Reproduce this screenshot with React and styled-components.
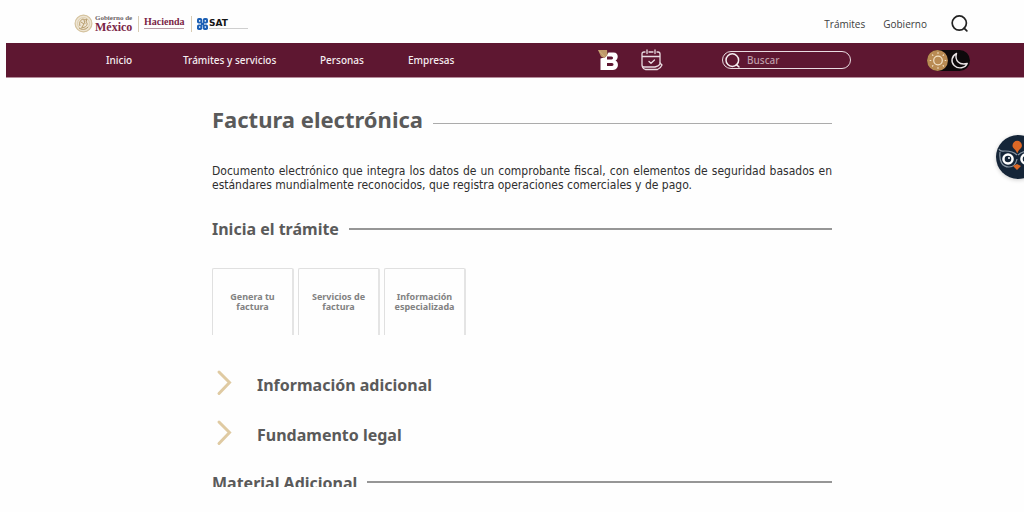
import React from "react";
import styled, { createGlobalStyle } from "styled-components";

const Global = createGlobalStyle`
  * { box-sizing: border-box; }
  body { margin: 0; background: #fefefe; font-family: "Noto Sans", "Open Sans", sans-serif; color: #333; overflow: hidden; }
  a { color: inherit; text-decoration: none; }
  h1, h2, p { margin: 0; }
  button { font: inherit; border: 0; padding: 0; background: none; cursor: pointer; }
`;

const Page = styled.div`
  position: relative;
  overflow: hidden;
`;

const TopBar = styled.header`
  display: flex;
  align-items: center;
  justify-content: space-between;
  height: 43px;
  padding: 4px 56px 0 74px;
`;

const Brands = styled.div`
  display: flex;
  align-items: center;
  height: 20px;
`;

const GobLink = styled.a`
  display: flex;
  align-items: center;
  gap: 2px;
  width: 64px;
`;

const GobText = styled.span`
  display: grid;
  font-family: "Liberation Serif", serif;
  font-weight: 700;
  font-size: 7px;
  line-height: 7px;
  color: #6b6264;
  white-space: nowrap;
`;

const GobName = styled.span`
  font-size: 12px;
  line-height: 11px;
  color: #7a2546;
`;

const Hacienda = styled.a`
  width: 53px;
  height: 16px;
  padding: 0 0 0 5px;
  border-left: 1px solid #d9ccb4;
  font-family: "Liberation Serif", serif;
  font-weight: 700;
  font-size: 10px;
  line-height: 12px;
  color: #7a2546;
`;

const HaciendaName = styled.span`
  display: block;
  width: 40px;
  border-bottom: 1px solid #b79aa5;
`;

const SatLink = styled.a`
  display: flex;
  align-items: center;
  gap: 1px;
  height: 16px;
  padding-left: 5px;
  border-left: 1px solid #d9ccb4;
`;

const SatName = styled.span`
  width: 39px;
  padding-top: 1px;
  border-bottom: 1px solid #cfcfcf;
  font-family: "DejaVu Sans", sans-serif;
  font-weight: 700;
  font-size: 9px;
  line-height: 9px;
  color: #161616;
`;

const TopLinks = styled.nav`
  display: flex;
  align-items: center;
  gap: 18px;
  font-family: "Open Sans", sans-serif;
  font-size: 10px;
  color: #3c3c3c;
`;

const IconButton = styled.button`
  display: grid;
  place-items: center;
  color: #222;
`;

const SiteSearch = styled(IconButton)`
  margin-left: 6px;
`;

const NavBar = styled.div`
  display: flex;
  align-items: center;
  height: 35px;
  margin-left: 6px;
  padding: 0 54px 0 100px;
  background: #5e1731;
  border-bottom: 1px solid #b58d9b;
  color: #f5edf0;
`;

const Menu = styled.nav`
  display: grid;
  grid-template-columns: 77px 137px 88px 1fr;
  width: 492px;
  font-size: 10px;
  font-weight: 500;
  white-space: nowrap;
`;

const Shortcuts = styled.div`
  display: flex;
  align-items: center;
  gap: 22px;
  width: 124px;
`;

const Search = styled.label`
  display: flex;
  align-items: center;
  gap: 7px;
  width: 129px;
  height: 18px;
  padding-left: 2px;
  border: 1px solid #e9dce1;
  border-radius: 9px;
`;

const SearchInput = styled.input`
  width: 90px;
  padding: 0;
  border: 0;
  outline: 0;
  background: transparent;
  color: #fff;
  font: 500 10px "Noto Sans", sans-serif;
  &::placeholder { color: #bd9ba7; opacity: 1; }
`;

const ThemeSwitch = styled.button`
  display: flex;
  align-items: center;
  width: 43px;
  height: 21px;
  margin-left: auto;
  border-radius: 11px;
  background: #0d090b;
`;

const Main = styled.main`
  padding: 26px 192px 0 212px;
`;

const HeadingRow = styled.div`
  display: flex;
  align-items: center;
  gap: 10px;
  &::after {
    content: "";
    flex: 1;
    height: 2px;
    background: #969696;
  }
`;

const TitleRow = styled(HeadingRow)`
  &::after {
    height: 1px;
    margin-top: 8px;
    background: #ababab;
  }
`;

const CutRow = styled(HeadingRow)`
  align-items: flex-start;
  height: 16px;
  overflow: hidden;
  &::after { margin-top: 10px; }
`;

const Title = styled.h1`
  font-size: 22px;
  line-height: 30px;
  color: #5a5a5a;
`;

const Subtitle = styled.h2`
  font-size: 16px;
  line-height: 24px;
  font-weight: 700;
  color: #5a5a5a;
`;

const Intro = styled.p`
  margin: 30px 0 25px;
  font-family: "DejaVu Sans Condensed", "Noto Sans", sans-serif;
  font-size: 12px;
  line-height: 14px;
  color: #2e2e2e;
  text-align: justify;
`;

const Cards = styled.div`
  display: flex;
  gap: 4px;
  margin: 27px 0 34px;
`;

const Card = styled.a`
  display: flex;
  align-items: center;
  justify-content: center;
  width: 82px;
  height: 67px;
  padding: 0 8px;
  border: 1px solid #e0e0e0;
  border-right: 2px solid #e4e4e4;
  border-bottom: 0;
  border-radius: 2px 2px 0 0;
  font-size: 9px;
  line-height: 10px;
  font-weight: 700;
  text-align: center;
  color: #828282;
`;

const Sections = styled.div`
  padding-bottom: 2px;
`;

const Accordion = styled.button`
  display: flex;
  align-items: flex-start;
  gap: 25px;
  width: 100%;
  height: 50px;
  padding-left: 4px;
  text-align: left;
`;

const AccordionTitle = styled(Subtitle)`
  padding-top: 4px;
`;

const Assistant = styled.button`
  position: absolute;
  top: 135px;
  right: -16px;
  width: 44px;
  height: 44px;
  border-radius: 50%;
  box-shadow: 0 1px 4px #0003;
`;

const Seal = () => (
  <svg width="19" height="19" viewBox="0 0 19 19" fill="none" stroke="#b79c6c">
    <circle cx="9.5" cy="9.5" r="8.4" fill="#eee5d3" stroke="#d5c39f" strokeWidth="1.2" />
    <circle cx="9.5" cy="9.5" r="6" stroke="#d9c9a8" strokeWidth=".8" />
    <path d="M6 12c-1-3 0-6 3-7l2 1 2-1-1 3c2 1 1 4-1 5l-4 1M7 8l3 2-2 3M10 6l1 4M5 14c3 2 6 2 9-1" />
  </svg>
);

const SatMark = () => (
  <svg width="11" height="12" viewBox="0 0 11 12">
    <g fill="#1c5fb4">
      <rect width="5.200" height="5.600" rx="1.800" /><rect x="5.800" width="5.200" height="5.600" rx="1.800" />
      <rect y="6.400" width="5.200" height="5.600" rx="1.800" /><rect x="5.800" y="6.400" width="5.200" height="5.600" rx="1.800" />
      <path d="M4 4.500h3v3H4z" />
    </g>
    <g fill="#fff">
      <circle cx="2.700" cy="2.900" r=".8" /><circle cx="8.300" cy="2.900" r=".8" />
      <circle cx="2.700" cy="9.100" r=".8" /><circle cx="8.300" cy="9.100" r=".8" />
    </g>
  </svg>
);

const Magnifier = ({ size }) => (
  <svg width={size} height={size} viewBox="0 0 16 16" fill="none" stroke="currentColor" strokeWidth="1.6" strokeLinecap="round">
    <circle cx="7.8" cy="7.6" r="6.7" />
    <path d="M12.3 12.4l2.6 2.6" />
  </svg>
);

const MailboxLogo = () => (
  <svg width="21" height="22" viewBox="0 0 21 22">
    <path fill="#fff" fillRule="evenodd" d="M2.500 9.500l5-1.500 3-4.500h5c5.500 0 5 6.500 2 8 4 2 3 9.500-2.500 9.500H2.500zM9 7.500v3h4.500c2 0 2-3 0-3zM9 14v3h5c2 0 2-3 0-3z" />
    <path fill="#bf9a69" d="M0 1h9l.5 5L6.500 9 3 7.500z" />
    <path d="M1 1.500l5.500 6" stroke="#d9ba8d" strokeWidth=".7" />
  </svg>
);

const CalendarIcon = () => (
  <svg width="22" height="22" viewBox="0 0 22 22" fill="none" stroke="#e9dce1" strokeWidth="1.3" strokeLinecap="round" strokeLinejoin="round">
    <path d="M4 3H3Q1 3 1 5v11q0 2 2 2h11q4-1 5-3V5q0-2-2-2h-1M8 3h4M1 7.500h18M6 1v3.500M14 1v3.500M8 12.500l2 1.800L13.500 11" />
    <path d="M1.500 18q1 2.500 3 2.500h12q3-1 4.500-4.500l-2-2" />
  </svg>
);

const SunMoon = () => (
  <svg width="43" height="21" viewBox="0 0 43 21" fill="none" stroke="#f3e3c8" strokeWidth="1.200" strokeLinecap="round">
    <circle cx="10.500" cy="10.500" r="10.500" fill="#b98b53" stroke="none" />
    <circle cx="11" cy="10.500" r="4.300" />
    <path d="M11 2.700v.6M11 17.700v.6M3.200 10.500h.6M18.200 10.500h.6M5.500 5l.4.400M16.100 15.600l.4.400M16.500 5l-.4.400M5.900 15.600l-.4.400" />
    <path stroke="#e8e2e4" strokeWidth="1.400" strokeLinejoin="round" d="M29.500 3.500c-5 2.500-6 8.500-2.300 12 4.200 4 11 2.700 13-2-4 1-7 .5-9-1.500-2.200-2.200-2.700-5.300-1.700-8.500z" />
  </svg>
);

const Owl = () => (
  <svg width="44" height="44" viewBox="0 0 44 44">
    <circle cx="22" cy="22" r="22" fill="#152538" />
    <path d="M21 18c-1-4-4.500-4-4.500-7.500a4.700 4.700 0 019.400 0c0 3.500-3.400 3.500-4.400 7.500z" fill="#dc6826" />
    <path d="M3 14c1 3 3 2 6 2 6 0 9 1 12 4M4 17c-1 9 2 15 9 15 5 0 7-3 8-8M40 14c-1 3-3 2-6 2-6 0-9 1-12 4" fill="none" stroke="#8895a3" strokeWidth="1.200" />
    <circle cx="12" cy="24" r="5.800" fill="#fff" /><circle cx="12" cy="24" r="3.300" fill="#152538" />
    <circle cx="13" cy="23" r="1" fill="#fff" />
    <circle cx="30" cy="24" r="5.800" fill="#fff" /><circle cx="30" cy="24" r="3.300" fill="#152538" />
    <path d="M17 31l4-2 4 2-4 4z" fill="#dc6826" />
  </svg>
);

const Chevron = () => (
  <svg width="16" height="28" viewBox="0 0 16 28" fill="none" stroke="#dfcaa2" strokeWidth="3" strokeLinecap="round">
    <path d="M3 3l10.500 10.500L3 24.500" />
  </svg>
);

const menu = ["Inicio", "Trámites y servicios", "Personas", "Empresas"];
const cards = ["Genera tu factura", "Servicios de factura", "Información especializada"];
const sections = ["Información adicional", "Fundamento legal"];

export default function App() {
  return (
    <Page>
      <Global />
      <TopBar>
        <Brands>
          <GobLink href="#gobierno">
            <Seal />
            <GobText>Gobierno de<GobName>México</GobName></GobText>
          </GobLink>
          <Hacienda href="#hacienda"><HaciendaName>Hacienda</HaciendaName></Hacienda>
          <SatLink href="#sat"><SatMark /><SatName>SAT</SatName></SatLink>
        </Brands>
        <TopLinks>
          <a href="#tramites">Trámites</a>
          <a href="#gob">Gobierno</a>
          <SiteSearch aria-label="Buscar en el sitio"><Magnifier size={17} /></SiteSearch>
        </TopLinks>
      </TopBar>
      <NavBar>
        <Menu>{menu.map((m) => <a href="#menu" key={m}>{m}</a>)}</Menu>
        <Shortcuts>
          <IconButton aria-label="Buzón tributario"><MailboxLogo /></IconButton>
          <IconButton aria-label="Citas"><CalendarIcon /></IconButton>
        </Shortcuts>
        <Search>
          <Magnifier size={15} />
          <SearchInput type="text" placeholder="Buscar" aria-label="Buscar" />
        </Search>
        <ThemeSwitch aria-label="Cambiar tema"><SunMoon /></ThemeSwitch>
      </NavBar>
      <Main>
        <TitleRow><Title>Factura electrónica</Title></TitleRow>
        <Intro>
          Documento electrónico que integra los datos de un comprobante fiscal, con elementos de seguridad basados en
          estándares mundialmente reconocidos, que registra operaciones comerciales y de pago.
        </Intro>
        <HeadingRow><Subtitle>Inicia el trámite</Subtitle></HeadingRow>
        <Cards>{cards.map((c) => <Card href="#tramite" key={c}>{c}</Card>)}</Cards>
        <Sections>
          {sections.map((s) => (
            <Accordion key={s} aria-expanded="false"><Chevron /><AccordionTitle as="span">{s}</AccordionTitle></Accordion>
          ))}
        </Sections>
        <CutRow><Subtitle>Material Adicional</Subtitle></CutRow>
      </Main>
      <Assistant aria-label="Asistente virtual"><Owl /></Assistant>
    </Page>
  );
}
